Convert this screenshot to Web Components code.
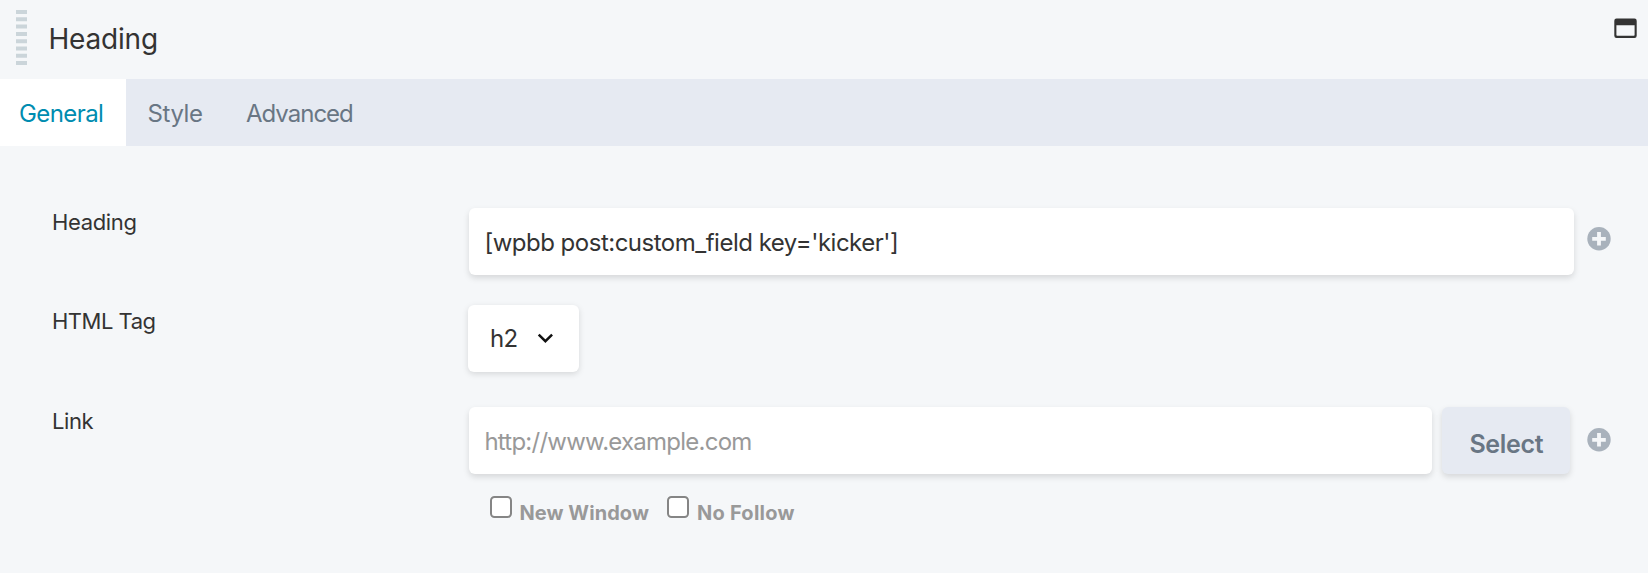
<!DOCTYPE html>
<html lang="en">
<head>
<meta charset="utf-8">
<title>Heading</title>
<style>
html,body{margin:0;background:#f5f7f9}
body{height:573px;overflow:hidden;font-family:Inter,"Liberation Sans",sans-serif;color:#333}
</style>
</head>
<body>
<settings-panel>
  <panel-header slot="header">Heading</panel-header>
  <panel-tabs slot="tabs">
    <panel-tab active style="width:106.5px;padding-left:19px;letter-spacing:-.58px">General</panel-tab>
    <panel-tab style="width:77.5px;padding-left:22px;letter-spacing:-.41px">Style</panel-tab>
    <panel-tab style="padding-left:21px;letter-spacing:-1px">Advanced</panel-tab>
  </panel-tabs>
  <setting-row style="height:97px;--label-top:2px;--spacing:-.34px" label="Heading">
    <text-box style="width:1105px;letter-spacing:-.5px;--indent:15px;--line:69px">[wpbb post:custom_field key='kicker']</text-box>
    <connect-button></connect-button>
  </setting-row>
  <setting-row style="height:102px;--label-top:4px;--spacing:-.5px" label="HTML Tag">
    <select-box>h2</select-box>
  </setting-row>
  <setting-row style="height:67px;--label-top:2px;--spacing:-.4px" label="Link">
    <text-box style="width:963px;color:#999;letter-spacing:-.76px;--indent:15px;--line:70px">http://www.example.com</text-box>
    <action-button>Select</action-button>
    <connect-button style="margin-left:17px;margin-top:21px"></connect-button>
  </setting-row>
  <check-group>
    <check-option style="letter-spacing:.06px">New Window</check-option>
    <check-option style="letter-spacing:.25px">No Follow</check-option>
  </check-group>
</settings-panel>
<script>
function define(name, markup, setup) {
  const template = document.createElement('template');
  template.innerHTML = markup;
  customElements.define(name, class extends HTMLElement {
    constructor() {
      super();
      this.attachShadow({mode: 'open'}).append(template.content.cloneNode(true));
    }
    connectedCallback() { if (setup) setup(this, this.shadowRoot); }
  });
}

define('settings-panel', `<style>
  :host{display:block;height:573px;background:#f5f7f9}
  main{padding:62px 0 0 52px}
</style><slot name="header"></slot><slot name="tabs"></slot><main><slot></slot></main>`);

define('panel-header', `<style>
  :host{display:flex;height:79px;align-items:flex-start}
  .grip{margin:10px 21.5px 0 16px}
  h1{flex:1;margin:0;font:400 28px/78px Inter,sans-serif;letter-spacing:-.2px}
  .window{margin:18px 11.5px 0 0}
</style><svg class="grip" width="11" height="56" viewBox="0 0 11 56"><path d="M5.5 0v55.2" stroke="#cbd5da" stroke-width="11" stroke-dasharray="4 3.3"/></svg><h1><slot></slot></h1>
<svg class="window" width="23" height="20" viewBox="0 0 23 20"><path fill="#333" fill-rule="evenodd" d="M2.5 .5h18a2.2 2.2 0 0 1 2.2 2.2v15a2.2 2.2 0 0 1-2.2 2.2h-18a2.2 2.2 0 0 1-2.2-2.2V2.7A2.2 2.2 0 0 1 2.5.5zM2.4 7.2v9.8q0 .8.8.8h16.6q.8 0 .8-.8V7.2z"/></svg>`);

define('panel-tabs', `<style>
  :host{display:flex;height:67px;background:#e6eaf2}
</style><slot></slot>`);

define('panel-tab', `<style>
  :host{display:block;box-sizing:content-box;height:66px;padding-top:1px;font-size:24px;line-height:67px;color:#697684}
  :host([active]){background:#fff;color:#008cb0}
</style><slot></slot>`);

define('setting-row', `<style>
  :host{display:grid;grid-template-columns:417.4px 1fr}
  label{margin-top:var(--label-top);font-size:22px;line-height:24px;letter-spacing:var(--spacing)}
  div{display:flex;align-items:flex-start}
</style><label></label><div><slot></slot></div>`,
  (host, root) => { root.querySelector('label').textContent = host.getAttribute('label'); });

define('text-box', `<style>
  :host{display:block;box-sizing:border-box;height:66.5px;padding-left:var(--indent);background:#fff;border-radius:6px;
    box-shadow:0 3px 6px rgba(0,0,0,.13);font-size:24px;line-height:var(--line);white-space:pre}
</style><slot></slot>`);

define('select-box', `<style>
  :host{display:flex;box-sizing:border-box;width:111px;height:67px;margin-left:-1.4px;padding-left:22px;background:#fff;border-radius:6px;
    box-shadow:0 2px 6px rgba(0,0,0,.13);font-size:24px;line-height:68px;letter-spacing:-.6px}
  svg{margin:27px 0 0 18.5px}
</style><slot></slot><svg width="18" height="12" viewBox="0 0 18 12" fill="none"><path d="M2.7 2.7l6.7 6.5L16.1 2.7" stroke="#111" stroke-width="2.5"/></svg>`);

define('action-button', `<style>
  :host{display:block;box-sizing:border-box;width:128px;height:67px;margin-left:10px;padding:7px 0 0 27px;background:#e6eaf2;border-radius:6px;
    box-shadow:0 3px 6px rgba(0,0,0,.13);font-size:25px;font-weight:600;line-height:61px;letter-spacing:-.29px;color:#697684}
</style><slot></slot>`);

define('connect-button', `<style>
  :host{display:block;width:24px;height:24px;margin:19px 0 0 12.5px}
  svg{display:block}
</style><svg width="24" height="24" viewBox="0 0 24 24"><circle cx="12" cy="11.8" r="11.7" fill="#a9b2bc"/><path d="M12 5v13.6M5.2 11.8h13.6" stroke="#f5f7f9" stroke-width="3.8"/></svg>`);

define('check-group', `<style>
  :host{display:flex;gap:18.5px;padding:22px 0 0 438px}
</style><slot></slot>`);

define('check-option', `<style>
  :host{display:flex;align-items:flex-start;font-size:20px;line-height:24px;font-weight:700;color:#999}
  i{box-sizing:border-box;width:22px;height:22px;border:2px solid #858585;border-radius:4.5px;background:#fff;margin-right:7.5px}
  span{margin-top:5px}
</style><i></i><span><slot></slot></span>`);
</script>
</body>
</html>
